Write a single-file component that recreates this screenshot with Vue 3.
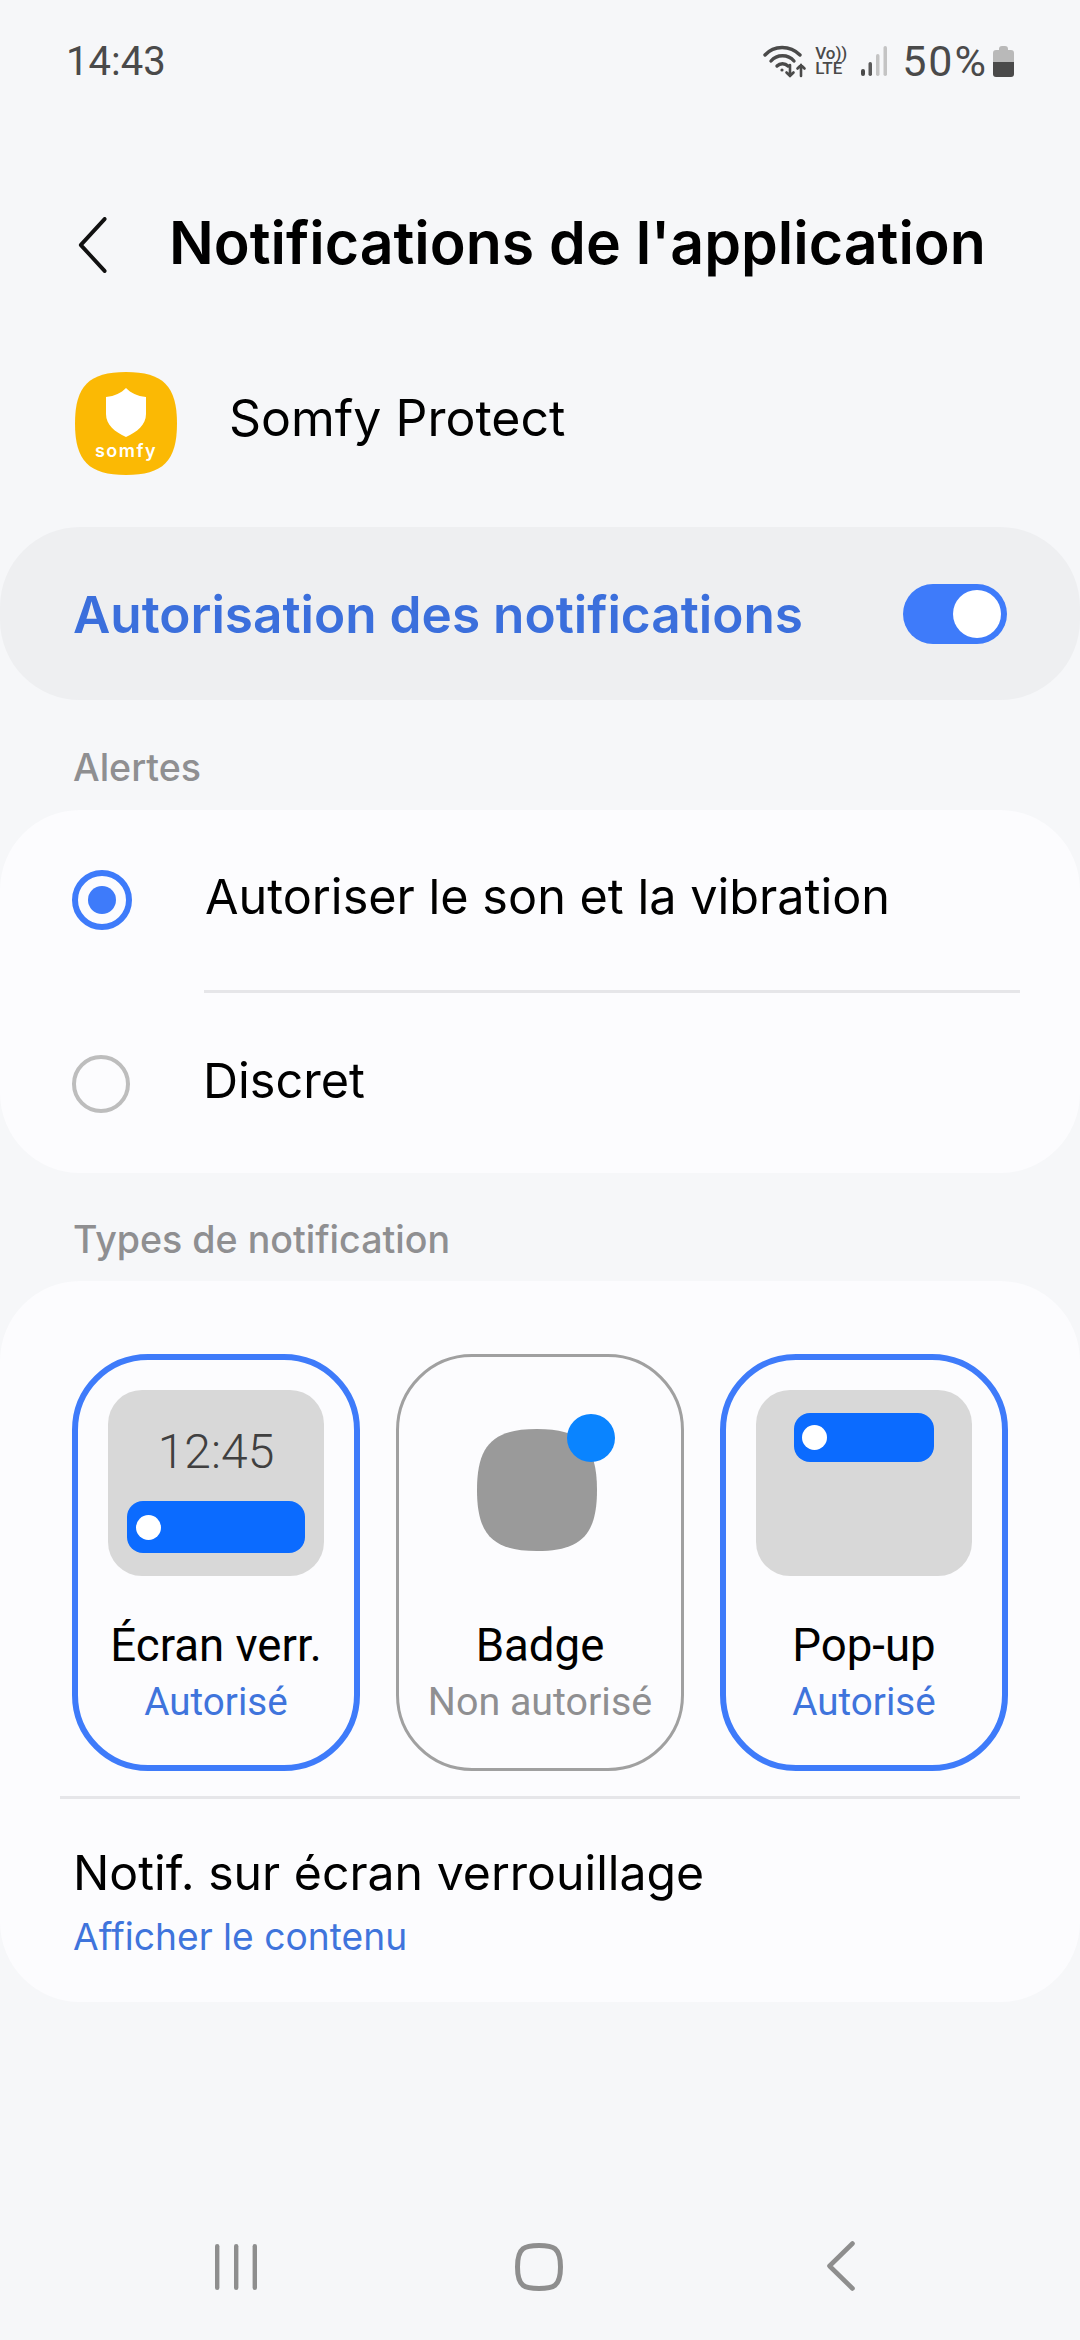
<script setup>
const tiles = [
  { key: 'lock', label: 'Écran verr.', state: 'Autorisé', on: true },
  { key: 'badge', label: 'Badge', state: 'Non autorisé', on: false },
  { key: 'popup', label: 'Pop-up', state: 'Autorisé', on: true },
]
</script>

<template>
  <div class="page">
    <div class="status">
      <span class="time">14:43</span>
      <div class="status-right">
        <svg class="wifi" width="44" height="34" viewBox="0 0 44 34" fill="none" stroke="#4a4a4a" stroke-linecap="round">
          <path d="M2 11 C11 1 27 1 37 11" stroke-width="3.4" />
          <path d="M8 17 C14 10 25 10 31 17" stroke-width="3.4" />
          <path d="M14 22 C17 19 22 19 25 22" stroke-width="3.4" />
          <circle cx="19" cy="26" r="1.6" fill="#4a4a4a" stroke="none" />
          <path d="M27 21 V32 M23.5 28.5 L27 32 L30.5 28.5" stroke-width="2.6" />
          <path d="M38 32 V21 M34.5 24.5 L38 21 L41.5 24.5" stroke-width="2.6" />
        </svg>
        <div class="volte"><span>Vo))</span><span>LTE</span></div>
        <svg class="signal" width="26" height="30" viewBox="0 0 26 30">
          <rect x="0" y="23" width="4" height="7" rx="2" fill="#4a4a4a" />
          <rect x="7.5" y="16" width="3.5" height="14" rx="1.7" fill="#5a5a5a" />
          <rect x="15" y="8" width="3.5" height="22" rx="1.7" fill="#c4c4c4" />
          <rect x="22.5" y="0" width="3.5" height="30" rx="1.7" fill="#c4c4c4" />
        </svg>
        <span class="pct">50%</span>
        <svg class="battery" width="21" height="31" viewBox="0 0 21 31">
          <path d="M6 3 Q6 0 9 0 H12 Q15 0 15 3 V4 H18 Q21 4 21 7 V16 H0 V7 Q0 4 3 4 H6 Z" fill="#b9b9b9" />
          <path d="M0 16 H21 V28 Q21 31 18 31 H3 Q0 31 0 28 Z" fill="#4a4a4a" />
        </svg>
      </div>
    </div>

    <header class="header">
      <svg class="back" width="32" height="56" viewBox="0 0 32 56" fill="none" stroke="#111" stroke-width="4" stroke-linecap="round" stroke-linejoin="round">
        <path d="M29 2 L3 28 L29 54" transform="translate(2 0) scale(0.92 1)" />
      </svg>
      <h1 class="title">Notifications de l'application</h1>
    </header>

    <div class="app-row">
      <svg class="app-icon" width="102" height="103" viewBox="0 0 102 103">
        <path d="M51 0 C88 0 102 14 102 51.5 C102 89 88 103 51 103 C14 103 0 89 0 51.5 C0 14 14 0 51 0 Z" fill="#fbb904" />
        <path d="M51 16 C56 21 62 24 71 25 V42 C71 53 62 60 51 65 C40 60 31 53 31 42 V25 C40 24 46 21 51 16 Z" fill="#fff" />
        <text x="51" y="85" text-anchor="middle" class="somfy">somfy</text>
      </svg>
      <span class="app-name">Somfy Protect</span>
    </div>

    <section class="toggle-card">
      <span class="toggle-label">Autorisation des notifications</span>
      <span class="switch"><span class="knob"></span></span>
    </section>

    <div class="section-label first">Alertes</div>
    <section class="card alerts">
      <div class="option">
        <span class="radio on"><span class="dot"></span></span>
        <span class="option-text">Autoriser le son et la vibration</span>
      </div>
      <div class="option-divider"></div>
      <div class="option second">
        <span class="radio"></span>
        <span class="option-text">Discret</span>
      </div>
    </section>

    <div class="section-label second-label">Types de notification</div>
    <section class="card types">
      <div class="tiles">
        <div v-for="t in tiles" :key="t.key" class="tile" :class="{ active: t.on }">
          <div class="preview">
            <div v-if="t.key === 'lock'" class="screen lock">
              <span class="clock">12:45</span>
              <span class="banner"><span class="banner-dot"></span></span>
            </div>
            <div v-else-if="t.key === 'popup'" class="screen popup">
              <span class="banner small"><span class="banner-dot"></span></span>
            </div>
            <div v-else class="badge-wrap">
              <svg width="120" height="122" viewBox="0 0 120 122">
                <path d="M60 0 C104 0 120 16 120 61 C120 106 104 122 60 122 C16 122 0 106 0 61 C0 16 16 0 60 0 Z" fill="#9a9a9a" />
              </svg>
              <span class="badge-dot"></span>
            </div>
          </div>
          <div class="tile-label">{{ t.label }}</div>
          <div class="tile-state">{{ t.state }}</div>
        </div>
      </div>
      <div class="types-divider"></div>
      <div class="lock-title">Notif. sur écran verrouillage</div>
      <div class="lock-sub">Afficher le contenu</div>
    </section>

    <nav class="nav">
      <svg width="44" height="48" viewBox="0 0 44 48" fill="#8e8e8e">
        <rect x="1" y="1" width="4.4" height="46" rx="2.2" />
        <rect x="20" y="1" width="4.4" height="46" rx="2.2" />
        <rect x="38.6" y="1" width="4.4" height="46" rx="2.2" />
      </svg>
      <svg width="48" height="48" viewBox="0 0 48 48" fill="none" stroke="#8e8e8e" stroke-width="5">
        <path d="M24 2.5 C38 2.5 45.5 4 45.5 24 C45.5 44 38 45.5 24 45.5 C10 45.5 2.5 44 2.5 24 C2.5 4 10 2.5 24 2.5 Z" />
      </svg>
      <svg width="28" height="50" viewBox="0 0 28 50" fill="none" stroke="#8e8e8e" stroke-width="4.6" stroke-linecap="round" stroke-linejoin="round">
        <path d="M25.5 2.500 L2.500 25 L25.500 47.500" />
      </svg>
    </nav>
  </div>
</template>

<style>
html, body { margin: 0; padding: 0; background: #f6f7f9; }
</style>

<style scoped>
.page {
  width: 1080px;
  height: 2340px;
  background: #f6f7f9;
  display: flex;
  flex-direction: column;
  font-family: Inter, "Noto Sans", sans-serif;
  color: #000;
  overflow: hidden;
}
.status {
  height: 122px;
  box-sizing: border-box;
  padding: 0 66px 0 66px;
  display: flex;
  align-items: center;
  justify-content: space-between;
  font-family: Roboto, sans-serif;
  color: #4a4a4a;
}
.time { font-size: 40px; }
.status-right { display: flex; align-items: center; }
.volte {
  margin-left: 8px;
  width: 32px;
  display: flex;
  flex-direction: column;
  font-size: 17px;
  font-weight: 500;
  line-height: 15.5px;
  color: #4a4a4a;
}
.signal { margin-left: 14px; }
.pct { margin-left: 15px; font-size: 43px; line-height: 50px; letter-spacing: 2px; }
.battery { margin-left: 5px; }

.header {
  height: 246px;
  display: flex;
  align-items: center;
  padding-left: 76px;
}
.back { width: 32px; height: 56px; }
.title {
  margin: 0 0 5px 61px;
  font-size: 59px;
  font-weight: 600;
  letter-spacing: 0;
  white-space: nowrap;
}
.app-row {
  margin-top: 4px;
  height: 103px;
  display: flex;
  align-items: center;
  padding-left: 75px;
}
.somfy { font-family: Inter, sans-serif; font-size: 18px; font-weight: 600; fill: #fff; letter-spacing: 1.5px; }
.app-name { margin: 0 0 12px 52px; font-size: 50px; white-space: nowrap; }

.toggle-card {
  margin-top: 52px;
  height: 173px;
  background: #eeeff1;
  border-radius: 80px;
  display: flex;
  align-items: center;
  justify-content: space-between;
  padding: 0 73px;
}
.toggle-label { font-size: 51.3px; font-weight: 600; color: #3b6fdc; white-space: nowrap; }
.switch {
  width: 104px;
  height: 60px;
  border-radius: 30px;
  background: #3e7bfa;
  position: relative;
  flex: none;
}
.knob {
  position: absolute;
  right: 6px;
  top: 6px;
  width: 48px;
  height: 48px;
  border-radius: 50%;
  background: #fff;
}
.section-label {
  padding-left: 73px;
  font-size: 37.6px;
  font-weight: 500;
  color: #8f8f91;
  line-height: 44px;
}
.section-label.first { margin-top: 46px; }
.section-label.second-label { margin-top: 45px; }
.card { background: #fcfcfe; border-radius: 80px; }
.alerts { margin-top: 20px; height: 363px; box-sizing: border-box; padding-top: 60px; }
.option { display: flex; align-items: center; height: 60px; padding-left: 72px; }
.option.second { margin-top: 61px; }
.radio {
  width: 58px;
  height: 58px;
  box-sizing: border-box;
  border: 4px solid #bdbdbd;
  border-radius: 50%;
  display: flex;
  align-items: center;
  justify-content: center;
  flex: none;
}
.radio.on { width: 60px; height: 60px; border: 6px solid #3e7bfa; }
.dot { width: 28px; height: 28px; border-radius: 50%; background: #3e7bfa; }
.option-text { margin: 0 0 8px 73px; font-size: 48.6px; white-space: nowrap; }
.option-divider { margin: 60px 60px 0 204px; height: 3px; background: #e6e6e9; }

.types { margin-top: 19px; height: 721px; box-sizing: border-box; padding-top: 73px; }
.tiles { display: flex; gap: 36px; padding: 0 72px; }
.tile {
  width: 288px;
  height: 417px;
  box-sizing: border-box;
  border: 3px solid #a0a0a0;
  border-radius: 76px;
  display: flex;
  flex-direction: column;
  align-items: center;
  flex: none;
}
.tile.active { border: 6px solid #3e7bfa; }
.preview { height: 186px; margin-top: 33px; width: 216px; display: flex; justify-content: center; flex: none; }
.tile.active .preview { margin-top: 30px; }
.screen {
  width: 216px;
  height: 186px;
  background: #d8d8d8;
  border-radius: 34px;
  display: flex;
  flex-direction: column;
  align-items: center;
  box-sizing: border-box;
}
.screen.lock { padding-top: 34px; }
.screen.popup { padding-top: 23px; }
.clock { font-family: Roboto, sans-serif; font-weight: 300; font-size: 48px; line-height: 56px; color: #404040; }
.banner {
  margin-top: 21px;
  width: 178px;
  height: 52px;
  border-radius: 16px;
  background: #0b6bff;
  display: flex;
  align-items: center;
  padding-left: 9px;
  box-sizing: border-box;
}
.banner.small { margin-top: 0; width: 140px; height: 49px; padding-left: 8px; }
.banner-dot { width: 25px; height: 25px; border-radius: 50%; background: #fff; }
.badge-wrap { position: relative; width: 120px; height: 122px; margin: 39px 6px 0 0; }
.badge-wrap svg { display: block; }
.badge-dot {
  position: absolute;
  left: 90px;
  top: -15px;
  width: 48px;
  height: 48px;
  border-radius: 50%;
  background: #0a84ff;
}
.tile-label {
  margin-top: 44px;
  font-family: Roboto, sans-serif;
  font-size: 45.6px;
  line-height: 52px;
  white-space: nowrap;
}
.tile-state {
  margin-top: 8px;
  font-family: Roboto, sans-serif;
  font-size: 38.6px;
  line-height: 44px;
  color: #3f74dc;
  white-space: nowrap;
}
.tile:not(.active) .tile-state { color: #8f8f91; font-size: 39.4px; }
.types-divider { margin: 25px 60px 0; height: 3px; background: #e6e6e9; }
.lock-title { margin: 46px 0 0 73px; font-size: 48.2px; line-height: 56px; white-space: nowrap; }
.lock-sub { margin: 14px 0 0 73px; font-size: 37.2px; line-height: 44px; color: #3f74dc; white-space: nowrap; }

.nav {
  margin-top: auto;
  height: 144px;
  box-sizing: border-box;
  padding: 0 0 49px 214px;
  display: flex;
  align-items: flex-end;
}
.nav svg:nth-child(2) { margin-left: 257px; }
.nav svg:nth-child(3) { margin-left: 264px; }
</style>
